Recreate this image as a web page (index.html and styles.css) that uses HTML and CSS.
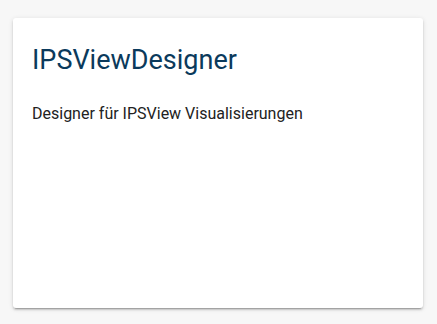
FILE: index.html
```html
<!DOCTYPE html>
<html lang="de">
<head>
    <meta charset="UTF-8">
    <meta name="viewport" content="width=device-width, initial-scale=1.0">
    <title>IPSViewDesigner</title>
    <link rel="stylesheet" href="styles.css">
</head>
<body>
    <div class="card">
        <h1 class="card-title">IPSViewDesigner</h1>
        <p class="card-text">Designer für IPSView Visualisierungen</p>
    </div>
</body>
</html>
```

FILE: styles.css
```css
body {
    margin: 0;
    padding: 18px 14px 16px 13px;
    background-color: #f7f7f7;
    font-family: Roboto, 'Noto Sans', sans-serif;
}

.card {
    box-sizing: border-box;
    width: 410px;
    height: 290px;
    background: #fff;
    border-radius: 3px;
    padding: 25px 19px;
    box-shadow: 0 2px 2px rgba(0, 0, 0, 0.14),
                0 3px 1px -2px rgba(0, 0, 0, 0.2),
                0 1px 5px rgba(0, 0, 0, 0.12);
}

.card-title {
    margin: 0;
    font-size: 27px;
    font-weight: 400;
    line-height: 34px;
    color: #0b3a5c;
}

.card-text {
    margin: 27px 0 0;
    font-size: 16px;
    line-height: 20px;
    color: #222;
}
```
